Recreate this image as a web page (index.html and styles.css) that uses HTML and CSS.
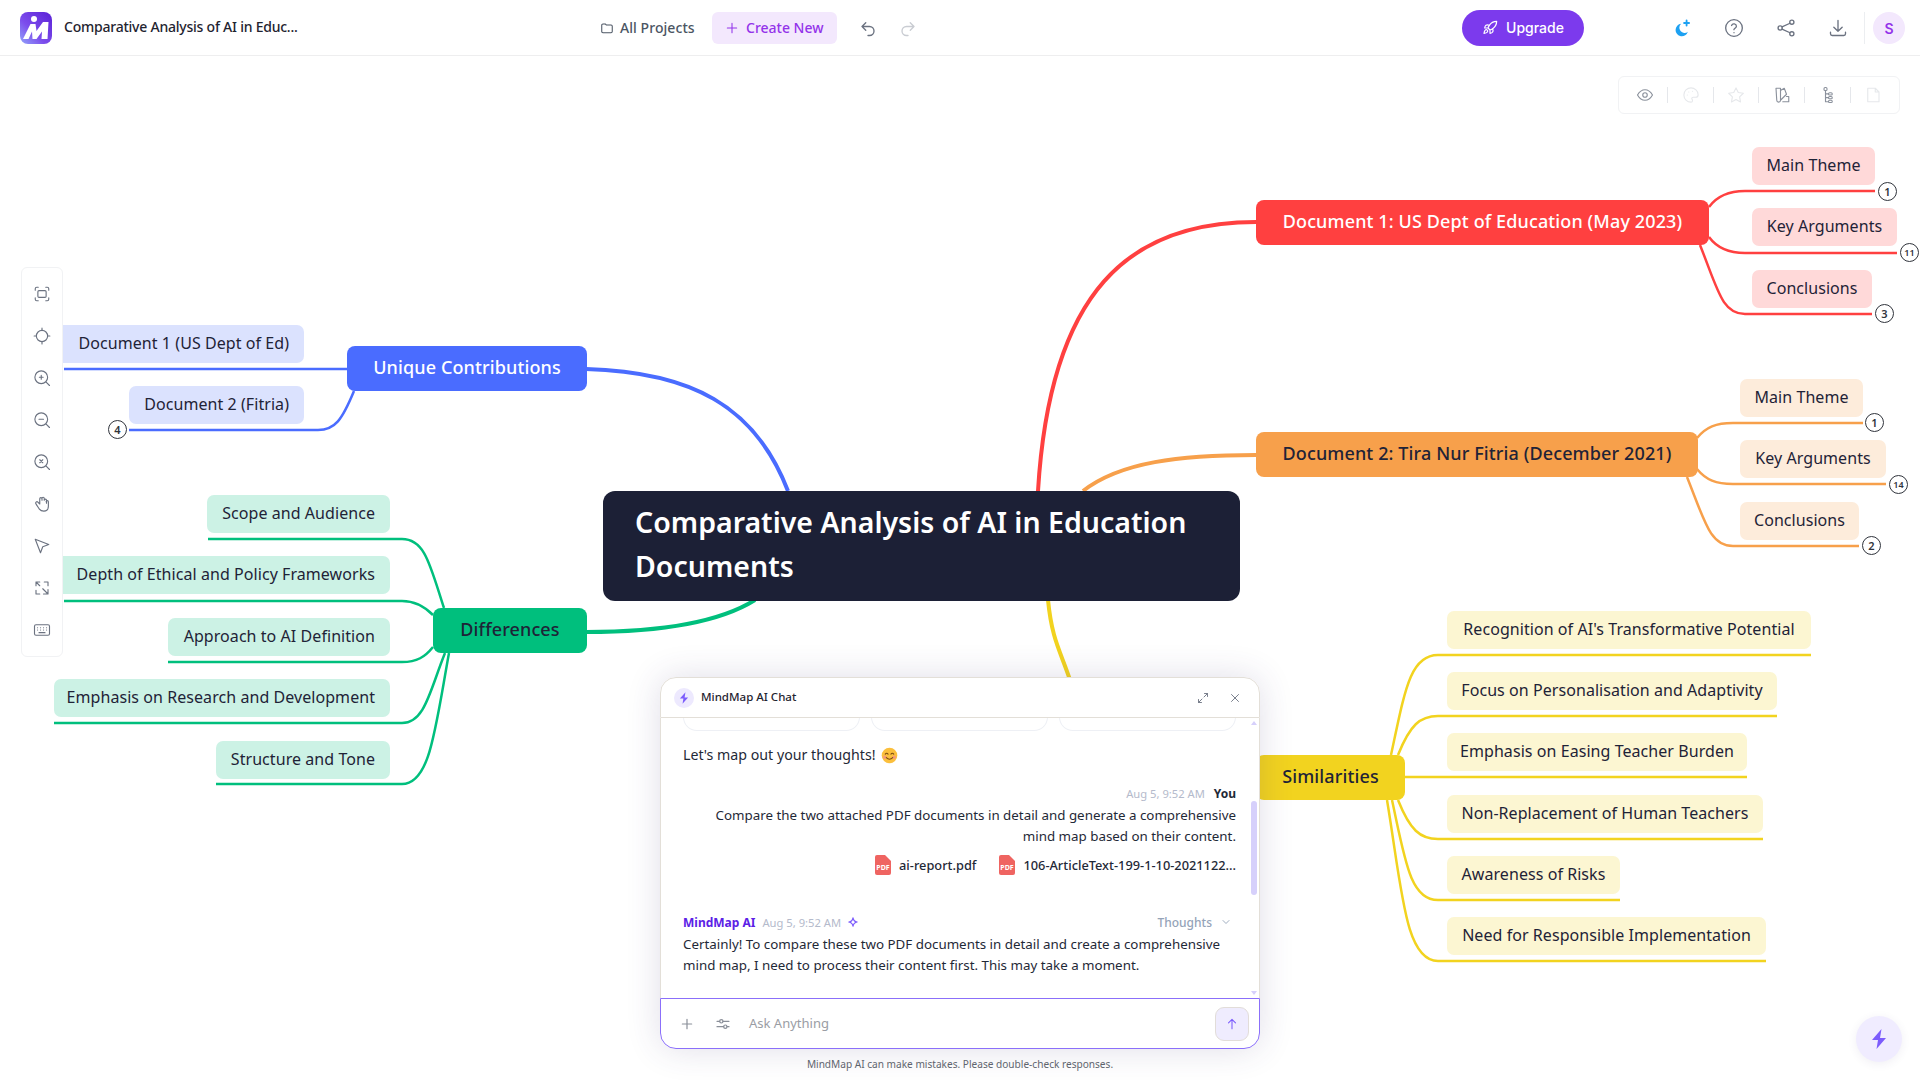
FILE: index.html
```html
<!DOCTYPE html>
<html lang="en">
<head>
    <meta charset="UTF-8">
    <title>Comparative Analysis of AI in Education Documents</title>
    <link rel="stylesheet" href="styles.css">
</head>
<body>
    <header class="topbar">
        <div class="topbar-left">
            <svg class="logo" viewBox="0 0 32 32">
                <defs>
                    <linearGradient id="logoGrad" x1="1" y1="0" x2="0" y2="1">
                        <stop offset="0" stop-color="#5b21d6"/>
                        <stop offset="0.6" stop-color="#7c4dec"/>
                        <stop offset="1" stop-color="#93a5fb"/>
                    </linearGradient>
                </defs>
                <rect width="32" height="32" rx="8" fill="url(#logoGrad)"/>
                <path d="M3 27 L10.500 12 H15.500 L16.500 19 L23 10 H28.500 L27.500 27 H21.500 L22 19.500 L16.500 27 H12.500 L12 19.500 L8.500 27 Z" fill="#fff"/>
                <circle cx="14" cy="7" r="3" fill="#fff"/>
            </svg>
            <span class="doc-title">Comparative Analysis of AI in Educ...</span>
        </div>
        <div class="topbar-mid">
            <a class="all-projects">
                <svg class="ico14" viewBox="0 0 24 24"><path d="M3 7a2 2 0 0 1 2-2h4l2 2h8a2 2 0 0 1 2 2v9a2 2 0 0 1-2 2H5a2 2 0 0 1-2-2z"/></svg>
                All Projects
            </a>
            <a class="create-new">
                <svg class="ico14" viewBox="0 0 24 24"><path d="M12 4v16M4 12h16"/></svg>
                Create New
            </a>
            <svg class="ico18 undo" viewBox="0 0 24 24"><path d="M9 5 4 10l5 5M4 10h10a6 6 0 0 1 0 12h-2"/></svg>
            <svg class="ico18 redo" viewBox="0 0 24 24"><path d="m15 5 5 5-5 5M20 10H10a6 6 0 0 0 0 12h2"/></svg>
        </div>
        <a class="upgrade">
            <svg class="ico16" viewBox="0 0 24 24"><path d="M5 15c-1.500 1.200-2 5-2 5s3.800-.5 5-2c.7-.8.700-2-.1-2.800-.8-.8-2.100-.9-2.900-.2zM12 15l-3-3a22 22 0 0 1 2-4A13 13 0 0 1 22 2c0 2.700-.8 7.500-6 11a22 22 0 0 1-4 2zM9 12H4s.5-3 2-4c1.600-1.100 5 0 5 0M12 15v5s3-.5 4-2c1.100-1.600 0-5 0-5"/></svg>
            <span>Upgrade</span>
        </a>
        <div class="topbar-right">
            <svg class="moon" viewBox="0 0 24 24"><path class="moon-fill" d="M11 7a7.500 7.500 0 1 0 8 9.500A6 6 0 0 1 11 7z"/><path d="M17.500 3v6M14.500 6h6"/></svg>
            <svg viewBox="0 0 24 24"><circle cx="12" cy="12" r="10"/><path d="M9.100 9a3 3 0 0 1 5.800 1c0 2-3 2.500-3 4M12 17.500v.1"/></svg>
            <svg viewBox="0 0 24 24"><circle cx="19" cy="5" r="2.500"/><circle cx="5" cy="12" r="2.500"/><circle cx="19" cy="19" r="2.500"/><path d="M7.200 10.700 16.800 6.300M7.200 13.300l9.600 4.400"/></svg>
            <svg viewBox="0 0 24 24"><path d="M12 3v13M7 11l5 5 5-5M3 17v2a2 2 0 0 0 2 2h14a2 2 0 0 0 2-2v-2"/></svg>
            <span class="top-divider"></span>
            <span class="avatar">S</span>
        </div>
    </header>

    <main class="canvas">
        <svg class="links" viewBox="0 0 1920 1080">
            <g class="thick">
                <path stroke="#4a6cff" d="M586 369C690 372 755 405 788 491"/>
                <path stroke="#ff4040" d="M1256 222C1130 222 1050 290 1038 491"/>
                <path stroke="#f7a04b" d="M1256 455C1180 455 1120 462 1083 491"/>
                <path stroke="#00bf7d" d="M586 632C650 632 715 625 755 600"/>
                <path stroke="#f2d31f" d="M1048 600C1052 640 1060 650 1070 680"/>
            </g>
            <g class="thin blue">
                <path d="M64 369H347"/>
                <path d="M129 430H318C335 430 342 420 354 391"/>
            </g>
            <g class="thin green">
                <path d="M208 539H402C425 539 430 565 444 608"/>
                <path d="M64 601H402C415 601 425 607 433 615"/>
                <path d="M168 662H402C417 662 425 657 433 647"/>
                <path d="M54 723H402C425 723 430 690 445 653"/>
                <path d="M216 784H402C430 784 435 730 449 653"/>
            </g>
            <g class="thin red">
                <path d="M1875 191H1745C1728 191 1717 196 1709 207"/>
                <path d="M1897 253H1745C1728 253 1717 248 1709 237"/>
                <path d="M1872 314H1745C1722 314 1718 290 1700 245"/>
            </g>
            <g class="thin orange">
                <path d="M1863 423H1733C1716 423 1706 427 1697 438"/>
                <path d="M1886 484H1733C1716 484 1706 480 1697 469"/>
                <path d="M1859 546H1733C1710 546 1705 522 1687 477"/>
            </g>
            <g class="thin yellow">
                <path d="M1811 655H1438C1410 655 1405 690 1391 755"/>
                <path d="M1777 716H1438C1420 716 1410 725 1398 755"/>
                <path d="M1747 777H1405"/>
                <path d="M1763 839H1438C1420 839 1410 830 1398 800"/>
                <path d="M1620 900H1438C1410 900 1405 860 1392 800"/>
                <path d="M1766 961H1438C1405 961 1402 890 1387 800"/>
            </g>
        </svg>

        <div class="node root">Comparative Analysis of AI in Education Documents</div>

        <div class="node branch bg-blue n-unique">Unique Contributions</div>
        <div class="node branch bg-green dark n-diff">Differences</div>
        <div class="node branch bg-red n-doc1">Document 1: US Dept of Education (May 2023)</div>
        <div class="node branch bg-orange dark n-doc2">Document 2: Tira Nur Fitria (December 2021)</div>
        <div class="node branch bg-yellow dark n-sim">Similarities</div>

        <div class="node leaf left lt-blue n-u1">Document 1 (US Dept of Ed)</div>
        <div class="node leaf left lt-blue n-u2">Document 2 (Fitria)</div>

        <div class="node leaf left lt-green n-d1">Scope and Audience</div>
        <div class="node leaf left lt-green n-d2">Depth of Ethical and Policy Frameworks</div>
        <div class="node leaf left lt-green n-d3">Approach to AI Definition</div>
        <div class="node leaf left lt-green n-d4">Emphasis on Research and Development</div>
        <div class="node leaf left lt-green n-d5">Structure and Tone</div>

        <div class="node leaf lt-red n-a1">Main Theme</div>
        <div class="node leaf lt-red n-a2">Key Arguments</div>
        <div class="node leaf lt-red n-a3">Conclusions</div>

        <div class="node leaf lt-orange n-b1">Main Theme</div>
        <div class="node leaf lt-orange n-b2">Key Arguments</div>
        <div class="node leaf lt-orange n-b3">Conclusions</div>

        <div class="node leaf lt-yellow n-s1">Recognition of AI's Transformative Potential</div>
        <div class="node leaf lt-yellow n-s2">Focus on Personalisation and Adaptivity</div>
        <div class="node leaf lt-yellow n-s3">Emphasis on Easing Teacher Burden</div>
        <div class="node leaf lt-yellow n-s4">Non-Replacement of Human Teachers</div>
        <div class="node leaf lt-yellow n-s5">Awareness of Risks</div>
        <div class="node leaf lt-yellow n-s6">Need for Responsible Implementation</div>

        <span class="count c-u2">4</span>
        <span class="count c-a1">1</span>
        <span class="count c-a2 small">11</span>
        <span class="count c-a3">3</span>
        <span class="count c-b1">1</span>
        <span class="count c-b2 small">14</span>
        <span class="count c-b3">2</span>

        <aside class="view-tools">
            <svg class="ico18" viewBox="0 0 24 24"><rect x="6.500" y="7.500" width="11" height="9" rx="1.500"/><path d="M3 7V5a2 2 0 0 1 2-2h2M17 3h2a2 2 0 0 1 2 2v2M21 17v2a2 2 0 0 1-2 2h-2M7 21H5a2 2 0 0 1-2-2v-2"/></svg>
            <svg class="ico18" viewBox="0 0 24 24"><circle cx="12" cy="12" r="7.500"/><path d="M12 1.500v3M12 19.500v3M1.500 12h3M19.500 12h3"/></svg>
            <svg class="ico18" viewBox="0 0 24 24"><circle cx="11" cy="11" r="8.500"/><path d="m17.500 17.500 4.500 4.500M11 8.500v5M8.500 11h5"/></svg>
            <svg class="ico18" viewBox="0 0 24 24"><circle cx="11" cy="11" r="8.500"/><path d="m17.500 17.500 4.500 4.500M8 11h6"/></svg>
            <svg class="ico18" viewBox="0 0 24 24"><circle cx="11" cy="11" r="8.500"/><path d="m17.500 17.500 4.500 4.500M9 9l4 4M13 9l-4 4"/></svg>
            <svg class="ico18" viewBox="0 0 24 24"><path d="M18 11V7a1.500 1.500 0 0 0-3 0M15 7V4.500a1.500 1.500 0 0 0-3 0V7M12 7V5a1.500 1.500 0 0 0-3 0v7l-2.500-2.500a1.700 1.700 0 0 0-2.500 2.300c2 3 3 5 4.500 7 1.500 2 3.500 2.700 6 2.700 3.500 0 6-2.500 6-6.500V9a1.500 1.500 0 0 0-3 0"/></svg>
            <svg class="ico18" viewBox="0 0 24 24"><path d="M3 3l18 7-8 3-3 8z"/></svg>
            <svg class="ico18" viewBox="0 0 24 24"><path d="M4 9V4h5M15 4h5v5M4 15v5h5M20 20l-7-7M20 14v6h-6M4 4l5 5"/></svg>
            <svg class="ico18" viewBox="0 0 24 24"><rect x="2" y="5" width="20" height="14" rx="2"/><path d="M6 9h.1M10 9h.1M14 9h.1M18 9h.1M6 12h.1M10 12h.1M14 12h.1M18 12h.1M8 15.500h8"/></svg>
        </aside>

        <div class="edit-tools">
            <svg class="ico18" viewBox="0 0 24 24"><path d="M2 12s4-7 10-7 10 7 10 7-4 7-10 7-10-7-10-7z"/><circle cx="12" cy="12" r="3"/></svg>
            <i></i>
            <svg class="ico18 off" viewBox="0 0 24 24"><path d="M12 2.500a9.500 9.500 0 1 0 0 19c1.500 0 2-1 2-2 0-1.500-1-2-1-3 0-1 1-1.500 2-1.500h3c2 0 3.500-1.500 3.500-3.500 0-5-4.500-9-9.500-9z"/><path d="M7 12h.1M9 8h.1M14 7h.1"/></svg>
            <i></i>
            <svg class="ico18 off" viewBox="0 0 24 24"><path d="m12 2.500 3 6.200 6.800 1-5 4.700 1.200 6.800-6-3.200-6 3.200 1.200-6.800-5-4.700 6.800-1z"/></svg>
            <i></i>
            <svg class="ico18" viewBox="0 0 24 24"><path d="M4 3h6v16a2.500 2.500 0 0 1-5 0zM10 6l5-3 3 8-8 8M13 21h8v-7h-3"/></svg>
            <i></i>
            <svg class="ico18" viewBox="0 0 24 24"><rect x="8" y="2" width="4" height="4" rx="1.500"/><rect x="14" y="9" width="5" height="3" rx="1.500"/><rect x="14" y="14" width="5" height="3" rx="1.500"/><rect x="14" y="19" width="5" height="3" rx="1.500"/><path d="M10 6v15h4M10 10.500h4M10 15.500h4"/></svg>
            <i></i>
            <svg class="ico18 off" viewBox="0 0 24 24"><path d="M5 3h10l5 5v13H5zM15 3v5h5"/></svg>
        </div>

        <section class="chat">
            <div class="chat-head">
                <span class="chat-badge">
                    <svg viewBox="0 0 24 24"><path d="M14.500 2 5 13h6l-1.500 9L19 11h-6z"/></svg>
                </span>
                <span class="chat-title">MindMap AI Chat</span>
                <svg class="ico12 expand" viewBox="0 0 24 24"><path d="M14 10l7-7M15 3h6v6M10 14l-7 7M3 15v6h6"/></svg>
                <svg class="ico12 closer" viewBox="0 0 24 24"><path d="M5 5l14 14M19 5 5 19"/></svg>
            </div>
            <div class="chat-body">
                <div class="prompt-cards"><span></span><span></span><span></span></div>
                <p class="hello">Let's map out your thoughts!
                    <svg class="smile" viewBox="0 0 24 24">
                        <circle cx="12" cy="12" r="11" fill="#fbbf3c"/>
                        <circle cx="5.500" cy="14.500" r="2.500" fill="#f59a7a"/>
                        <circle cx="18.500" cy="14.500" r="2.500" fill="#f59a7a"/>
                        <path d="M6 10q2-2.500 4 0M14 10q2-2.500 4 0M7.500 15q4.500 4.500 9 0" fill="none" stroke="#7a4a12" stroke-width="1.500" stroke-linecap="round"/>
                    </svg>
                </p>
                <div class="msg-meta mine"><time>Aug 5, 9:52 AM</time><b>You</b></div>
                <p class="msg mine">Compare the two attached PDF documents in detail and generate a comprehensive<br>mind map based on their content.</p>
                <div class="files">
                    <span class="file"><svg viewBox="0 0 16 20"><path d="M0 2a2 2 0 0 1 2-2h8l6 6v12a2 2 0 0 1-2 2H2a2 2 0 0 1-2-2z" fill="#ef6461"/><text x="8" y="15" class="pdf-label">PDF</text></svg>ai-report.pdf</span>
                    <span class="file"><svg viewBox="0 0 16 20"><path d="M0 2a2 2 0 0 1 2-2h8l6 6v12a2 2 0 0 1-2 2H2a2 2 0 0 1-2-2z" fill="#ef6461"/><text x="8" y="15" class="pdf-label">PDF</text></svg>106-ArticleText-199-1-10-2021122...</span>
                </div>
                <div class="msg-meta ai">
                    <b>MindMap AI</b><time>Aug 5, 9:52 AM</time>
                    <svg class="sparkle" viewBox="0 0 24 24"><path d="M12 2c1 6 4 9 10 10-6 1-9 4-10 10-1-6-4-9-10-10 6-1 9-4 10-10z"/></svg>
                    <span class="thoughts">Thoughts
                        <svg class="ico12" viewBox="0 0 24 24"><path d="m6 9 6 6 6-6"/></svg>
                    </span>
                </div>
                <p class="msg">Certainly! To compare these two PDF documents in detail and create a comprehensive<br>mind map, I need to process their content first. This may take a moment.</p>
                <div class="scroll-track">
                    <span class="arrow-up"></span>
                    <span class="thumb"></span>
                    <span class="arrow-down"></span>
                </div>
            </div>
            <div class="chat-input">
                <svg class="ico16" viewBox="0 0 24 24"><path d="M12 5v14M5 12h14"/></svg>
                <svg class="ico16" viewBox="0 0 24 24"><path d="M3 8h4M12 8h9M3 16h10M18 16h3"/><circle cx="9.500" cy="8" r="2.500"/><circle cx="15.500" cy="16" r="2.500"/></svg>
                <span class="placeholder">Ask Anything</span>
                <span class="send">
                    <svg class="ico14" viewBox="0 0 24 24"><path d="M12 20V4M6 10l6-6 6 6"/></svg>
                </span>
            </div>
        </section>
        <p class="disclaimer">MindMap AI can make mistakes. Please double-check responses.</p>

        <span class="fab">
            <svg viewBox="0 0 24 24"><path d="M14.500 2 5 13h6l-1.500 9L19 11h-6z"/></svg>
        </span>
    </main>
</body>
</html>
```

FILE: styles.css
```css
* {
    margin: 0;
    padding: 0;
    box-sizing: border-box;
}

body {
    width: 1920px;
    height: 1080px;
    overflow: hidden;
    background: #fff;
    font-family: "Noto Sans", "Open Sans", sans-serif;
    color: #1f2937;
}

svg {
    display: block;
    fill: none;
    stroke: currentColor;
    stroke-width: 1.8;
    stroke-linecap: round;
    stroke-linejoin: round;
    flex: none;
}

.ico12 { width: 12px; height: 12px; }
.ico14 { width: 14px; height: 14px; }
.ico16 { width: 16px; height: 16px; }
.ico18 { width: 18px; height: 18px; }

/* top bar */
.topbar {
    height: 56px;
    border-bottom: 1px solid #eeeeef;
    position: relative;
    z-index: 5;
    display: flex;
    align-items: center;
    padding-left: 20px;
}

.topbar-left {
    display: flex;
    align-items: center;
    gap: 12px;
    width: 580px;
}

.logo {
    width: 32px;
    height: 32px;
    stroke: none;
}

.logo path, .logo circle {
    stroke: none;
}

.doc-title {
    font-size: 14px;
    font-weight: 500;
    color: #1f2430;
    letter-spacing: -0.23px;
    padding-bottom: 2px;
}

.topbar-mid {
    display: flex;
    align-items: center;
    color: #4b5563;
    font-size: 14px;
    font-weight: 500;
}

.all-projects {
    display: flex;
    align-items: center;
    gap: 6px;
    width: 112px;
    color: #4b5563;
    letter-spacing: 0.06px;
}

.create-new {
    display: flex;
    align-items: center;
    gap: 7px;
    width: 125px;
    height: 32px;
    padding-left: 13px;
    border-radius: 6px;
    background: #f3e8fd;
    color: #9333ea;
}

.undo {
    margin-left: 22px;
    color: #6b7280;
}

.redo {
    margin-left: 22px;
    color: #c9ccd2;
}

.upgrade {
    position: absolute;
    left: 1462px;
    top: 10px;
    width: 122px;
    height: 36px;
    border-radius: 18px;
    background: #7c3aed;
    color: #fff;
    font-family: Inter, sans-serif;
    font-size: 14px;
    font-weight: 500;
    display: flex;
    align-items: center;
    justify-content: center;
    gap: 8px;
}

.upgrade span { padding-bottom: 1px; }

.topbar-right {
    position: absolute;
    left: 1672px;
    top: 12px;
    height: 32px;
    display: flex;
    align-items: center;
    gap: 32px;
    color: #6b7280;
}

.topbar-right svg {
    width: 20px;
    height: 20px;
    stroke-width: 1.600;
}

.topbar-right .moon {
    color: #1da1f2;
    stroke-width: 2.200;
}

.moon-fill { fill: currentColor; stroke: none; }

.top-divider {
    width: 1px;
    height: 32px;
    background: #eceef1;
    margin-left: -16px;
    margin-right: -24px;
}

.avatar {
    width: 32px;
    height: 32px;
    border-radius: 50%;
    background: #f3e8fd;
    color: #9333ea;
    font-family: Inter, sans-serif;
    font-size: 14px;
    font-weight: 600;
    display: flex;
    align-items: center;
    justify-content: center;
}

/* mind map */
.canvas {
    position: absolute;
    left: 0;
    top: 0;
    width: 1920px;
    height: 1080px;
}

.links {
    position: absolute;
    left: 0;
    top: 0;
    width: 1920px;
    height: 1080px;
}

.thick path { stroke-width: 4; stroke-linecap: butt; }
.thin path { stroke-width: 2.500; stroke-linecap: butt; }
.thin.blue { stroke: #4a6cff; }
.thin.green { stroke: #00bf7d; }
.thin.red { stroke: #ff4040; }
.thin.orange { stroke: #f7a04b; }
.thin.yellow { stroke: #f2d31f; }

.node {
    position: absolute;
    display: flex;
    align-items: center;
    justify-content: center;
    color: #1f2337;
}

.root {
    left: 603px;
    top: 491px;
    width: 637px;
    height: 110px;
    justify-content: flex-start;
    padding: 0 32px 5px;
    border-radius: 12px;
    background: #1c2036;
    color: #fff;
    font-size: 28.500px;
    font-weight: 600;
    line-height: 44px;
}

.branch {
    height: 45px;
    padding-bottom: 4px;
    border-radius: 8px;
    font-size: 18px;
    font-weight: 500;
    letter-spacing: 0.12px;
    color: #fff;
}

.branch.dark { color: #1f2337; }
.bg-blue { background: #4a6cff; }
.bg-green { background: #00bf7d; }
.bg-red { background: #ff4040; }
.bg-orange { background: #f7a04b; }
.bg-yellow { background: #f2d31f; }

.leaf {
    height: 38px;
    padding-bottom: 3px;
    border-radius: 7px;
    font-size: 16px;
    letter-spacing: 0.06px;
}

/* left side leaves hang off their right edge */
.leaf.left {
    justify-content: flex-end;
    padding-right: 15px;
}

.lt-blue { background: #dbe2fe; }
.lt-green { background: #ccf2e5; }
.lt-red { background: #ffd9d9; }
.lt-orange { background: #fdecdb; }
.lt-yellow { background: #fcf6d2; }

.n-unique { left: 347px; top: 346px; width: 240px; }
.n-diff { left: 433px; top: 608px; width: 154px; }
.n-doc1 { left: 1256px; top: 200px; width: 453px; }
.n-doc2 { left: 1256px; top: 432px; width: 442px; }
.n-sim { left: 1256px; top: 755px; width: 149px; }

.n-u1 { left: 54px; top: 325px; width: 250px; }
.n-u2 { left: 129px; top: 386px; width: 175px; }

.n-d1 { left: 207px; top: 495px; width: 183px; }
.n-d2 { left: 54px; top: 556px; width: 336px; }
.n-d3 { left: 168px; top: 618px; width: 222px; }
.n-d4 { left: 54px; top: 679px; width: 336px; }
.n-d5 { left: 216px; top: 741px; width: 174px; }

.n-a1 { left: 1752px; top: 147px; width: 123px; }
.n-a2 { left: 1752px; top: 208px; width: 145px; }
.n-a3 { left: 1752px; top: 270px; width: 120px; }

.n-b1 { left: 1740px; top: 379px; width: 123px; }
.n-b2 { left: 1740px; top: 440px; width: 146px; }
.n-b3 { left: 1740px; top: 502px; width: 119px; }

.n-s1 { left: 1447px; top: 611px; width: 364px; }
.n-s2 { left: 1447px; top: 672px; width: 330px; }
.n-s3 { left: 1447px; top: 733px; width: 300px; }
.n-s4 { left: 1447px; top: 795px; width: 316px; }
.n-s5 { left: 1447px; top: 856px; width: 173px; }
.n-s6 { left: 1447px; top: 917px; width: 319px; }

.count {
    position: absolute;
    width: 19px;
    height: 19px;
    border: 1.500px solid #30343c;
    border-radius: 50%;
    background: #fff;
    color: #30343c;
    font-size: 11px;
    font-weight: 600;
    display: flex;
    align-items: center;
    justify-content: center;
}

.count.small { font-size: 9px; }

.c-u2 { left: 108px; top: 420px; }
.c-a1 { left: 1878px; top: 182px; }
.c-a2 { left: 1900px; top: 243px; }
.c-a3 { left: 1875px; top: 304px; }
.c-b1 { left: 1865px; top: 413px; }
.c-b2 { left: 1889px; top: 475px; }
.c-b3 { left: 1862px; top: 536px; }

/* floating tool panels */
.view-tools {
    position: absolute;
    left: 21px;
    top: 267px;
    width: 42px;
    height: 390px;
    padding: 17px 0;
    background: #fff;
    border: 1px solid #f1f2f4;
    border-radius: 6px;
    display: flex;
    flex-direction: column;
    align-items: center;
    justify-content: space-between;
    color: #6b7280;
}

.view-tools svg { stroke-width: 1.500; }

.edit-tools {
    position: absolute;
    left: 1618px;
    top: 76px;
    width: 282px;
    height: 38px;
    padding: 0 17px;
    background: #fff;
    border: 1px solid #f1f2f4;
    border-radius: 6px;
    display: flex;
    align-items: center;
    justify-content: space-between;
    color: #8b919c;
}

.edit-tools svg { stroke-width: 1.500; }

.edit-tools i {
    width: 1px;
    height: 16px;
    background: #e5e7eb;
}

.edit-tools .off { color: #e6e8eb; }

/* chat */
.chat {
    position: absolute;
    left: 660px;
    top: 677px;
    width: 600px;
    height: 372px;
    background: #fff;
    border-radius: 16px;
    box-shadow: 0 0 34px rgba(60, 50, 110, 0.16);
    display: flex;
    flex-direction: column;
}

.chat-head {
    height: 41px;
    flex: none;
    border: 1px solid #e3dfd8;
    border-radius: 16px 16px 0 0;
    display: flex;
    align-items: center;
    padding: 0 18px 0 13px;
    color: #6b7280;
}

.chat-badge {
    width: 20px;
    height: 20px;
    border-radius: 50%;
    background: #ede9fe;
    display: flex;
    align-items: center;
    justify-content: center;
}

.chat-badge svg {
    width: 14px;
    height: 14px;
    fill: #7c5cfc;
    stroke: none;
}

.chat-title {
    margin-left: 7px;
    padding-bottom: 2px;
    font-size: 11.500px;
    font-weight: 500;
    color: #1f2430;
    flex: 1;
}

.closer { margin-left: 20px; }

.chat-body {
    position: relative;
    flex: 1;
    overflow: hidden;
    padding: 0 23px 0 22px;
    border-left: 1px solid #e3dfd8;
    border-right: 1px solid #e3dfd8;
    color: #1f2937;
}

.prompt-cards {
    display: flex;
    gap: 11px;
    height: 14px;
    margin-top: -1px;
}

.prompt-cards span {
    flex: 1;
    border: 1px solid #eef0f5;
    border-top: 0;
    border-radius: 0 0 14px 14px;
}

.hello {
    margin-top: 13px;
    height: 22px;
    font-size: 14.200px;
    line-height: 22px;
    display: flex;
    align-items: center;
    gap: 5px;
}

.smile {
    width: 17px;
    height: 17px;
    stroke: none;
}

.msg-meta {
    display: flex;
    align-items: center;
    font-size: 11.200px;
    height: 16px;
}

.msg-meta.mine {
    margin-top: 19px;
    justify-content: flex-end;
    gap: 9px;
}

.msg-meta time { color: #b4bacb; }
.msg-meta b { font-size: 12px; font-weight: 700; color: #1f2937; }

.msg {
    line-height: 21px;
    font-size: 13.350px;
}

.msg.mine {
    margin-top: 4px;
    text-align: right;
}

.files {
    margin-top: 8px;
    display: flex;
    justify-content: flex-end;
    gap: 23px;
    font-size: 12.800px;
    font-weight: 500;
    height: 20px;
}

.file {
    display: flex;
    align-items: center;
    gap: 8px;
}

.file svg {
    width: 16px;
    height: 20px;
    stroke: none;
}

.pdf-label {
    fill: #fff;
    font-size: 7px;
    font-weight: 700;
    text-anchor: middle;
}

.msg-meta.ai {
    margin-top: 39px;
    gap: 7px;
}

.msg-meta.ai b { color: #5b21e6; }

.sparkle {
    width: 10px;
    height: 10px;
    stroke: #7c5cfc;
    stroke-width: 3;
}

.thoughts {
    margin-left: auto;
    margin-right: 4px;
    display: flex;
    align-items: center;
    gap: 8px;
    color: #94a3b8;
    font-size: 12px;
    font-weight: 500;
}

.msg-meta.ai + .msg { margin-top: 4px; }

.scroll-track {
    position: absolute;
    right: 2px;
    top: 0;
    bottom: 0;
    width: 6px;
}

.arrow-up, .arrow-down {
    position: absolute;
    left: 0;
    border-left: 3px solid transparent;
    border-right: 3px solid transparent;
}

.arrow-up { top: 3px; border-bottom: 4px solid #d6d0fb; }
.arrow-down { bottom: 3px; border-top: 4px solid #d6d0fb; }

.thumb {
    position: absolute;
    left: 0;
    top: 83px;
    width: 6px;
    height: 94px;
    border-radius: 3px;
    background: #d6d0fb;
}

.chat-input {
    height: 51px;
    flex: none;
    border: 1px solid #8b6ffa;
    border-radius: 0 0 16px 16px;
    background: #fff;
    display: flex;
    align-items: center;
    padding: 0 10px 0 18px;
    color: #8a8f99;
}

.chat-input svg + svg { margin-left: 20px; }

.placeholder {
    margin-left: 18px;
    padding-bottom: 2px;
    flex: 1;
    font-size: 13px;
    color: #9a9da4;
}

.send {
    width: 34px;
    height: 34px;
    border-radius: 9px;
    background: #efecfe;
    border: 1px solid #e2ddd9;
    color: #7c5cfc;
    display: flex;
    align-items: center;
    justify-content: center;
}

.disclaimer {
    position: absolute;
    left: 660px;
    top: 1056px;
    width: 600px;
    text-align: center;
    font-size: 10.100px;
    line-height: 16px;
    color: #60646e;
}

.fab {
    position: absolute;
    left: 1856px;
    top: 1016px;
    width: 46px;
    height: 46px;
    border-radius: 50%;
    background: #f0ecff;
    box-shadow: 0 2px 10px rgba(60, 50, 110, 0.08);
    display: flex;
    align-items: center;
    justify-content: center;
}

.fab svg {
    width: 24px;
    height: 24px;
    fill: #7c5cfc;
    stroke: none;
}
```
